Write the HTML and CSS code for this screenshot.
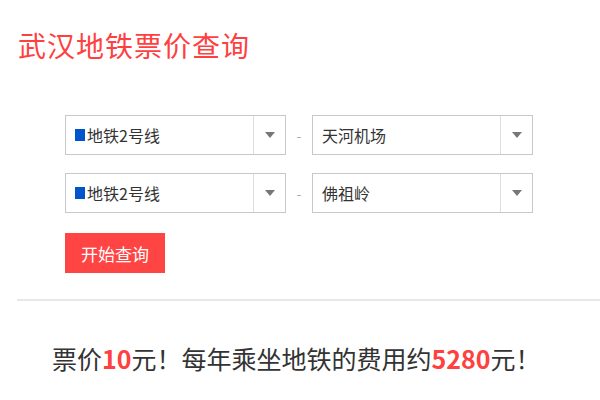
FILE: index.html
```html
<!DOCTYPE html>
<html lang="zh-CN">
<head>
  <meta charset="UTF-8" />
  <title>武汉地铁票价查询</title>
  <link rel="stylesheet" href="styles.css">
</head>
<body>
  <h1 class="titulo">武汉地铁票价查询</h1>

  <form class="consulta">
    <div class="linha">
      <div class="seletor">
        <span class="valor"><i class="cor-linha"></i>地铁2号线</span>
        <span class="seta"></span>
      </div>
      <span class="traco">-</span>
      <div class="seletor">
        <span class="valor">天河机场</span>
        <span class="seta"></span>
      </div>
    </div>
    <div class="linha">
      <div class="seletor">
        <span class="valor"><i class="cor-linha"></i>地铁2号线</span>
        <span class="seta"></span>
      </div>
      <span class="traco">-</span>
      <div class="seletor">
        <span class="valor">佛祖岭</span>
        <span class="seta"></span>
      </div>
    </div>
    <button type="button" class="botao">开始查询</button>
  </form>

  <hr class="divisor">

  <p class="resultado">票价<b>10</b>元！每年乘坐地铁的费用约<b>5280</b>元！</p>
</body>
</html>
```

FILE: styles.css
```css
:root {
  --vermelho: #ff4040;
  --borda: #c8c8c8;
  --texto: #333;
}

* {
  margin: 0;
  padding: 0;
  box-sizing: border-box;
}

body {
  font-family: "Noto Sans CJK SC", "Noto Sans", sans-serif;
  background-color: #fff;
  color: var(--texto);
  padding-top: 25px;
}

.titulo {
  font-size: 28px;
  font-weight: 400;
  letter-spacing: 1px;
  color: var(--vermelho);
  margin-left: 18px;
  line-height: 40px;
}

.consulta {
  margin: 50px 0 0 65px;
  display: flex;
  flex-direction: column;
  gap: 18px;
}

.linha {
  display: flex;
  align-items: center;
}

.seletor {
  width: 221px;
  height: 40px;
  border: 1px solid var(--borda);
  display: flex;
  font-size: 16px;
}

.valor {
  flex: 1;
  display: flex;
  align-items: center;
  padding-left: 9px;
}

.cor-linha {
  display: inline-block;
  width: 10px;
  height: 12px;
  background-color: #0055cc;
  margin-right: 2px;
}

.seta {
  width: 32px;
  border-left: 1px solid #ddd;
  display: flex;
  align-items: center;
  justify-content: center;
}

.seta::after {
  content: "";
  border-left: 5px solid transparent;
  border-right: 5px solid transparent;
  border-top: 6px solid #777;
}

.traco {
  width: 26px;
  text-align: center;
  color: #aaa;
  font-size: 14px;
}

.botao {
  width: 100px;
  height: 40px;
  margin-top: 2px;
  border: none;
  background-color: #ff4444;
  color: #fff;
  font-family: inherit;
  font-size: 17px;
}

.divisor {
  border: none;
  height: 2px;
  background-color: #e8e8e8;
  margin: 26px 0 0 17px;
}

.resultado {
  font-size: 25px;
  margin: 39px 0 0 52px;
  line-height: 36px;
}

.resultado b {
  color: var(--vermelho);
}
```
